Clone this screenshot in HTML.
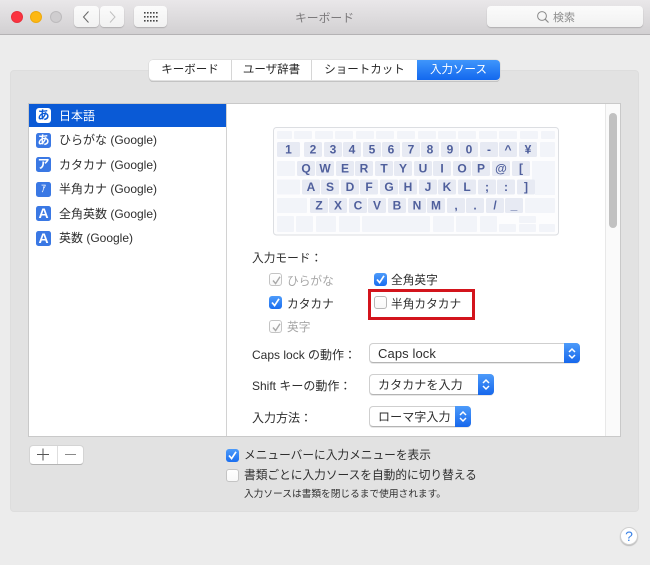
<!DOCTYPE html>
<html lang="ja">
<head>
<meta charset="utf-8">
<title>キーボード</title>
<style>
html,body{margin:0;padding:0;background:#ececec}
body{width:650px;height:565px;overflow:hidden;position:relative;background:#ececec;font-family:"Liberation Sans","Noto Sans CJK JP",sans-serif;font-size:11.7px;color:#2e2e2e;filter:blur(.35px)}
.a{position:absolute;box-sizing:border-box}
.t{position:absolute;white-space:nowrap;line-height:16px;height:16px}
.btn{position:absolute;box-sizing:border-box;background:linear-gradient(#fbfbfb,#f1f1f1);border-radius:4px;box-shadow:0 1px 1px #b0aeb0}
.light{position:absolute;width:12px;height:12px;border-radius:50%;box-sizing:border-box;top:11px}
.tab{position:absolute;top:60px;height:20px;line-height:21px;text-align:center;background:#fff;border-right:1px solid #d6d6d6;box-sizing:border-box;font-size:11.5px;color:#262626}
.ic{position:absolute;left:36px;width:15px;height:15px;border-radius:2.5px;background:#3a78e4;color:#fff;font-size:12px;line-height:15px;text-align:center;font-weight:bold}
.cb{position:absolute;width:13px;height:13px;box-sizing:border-box;border-radius:3px;background:linear-gradient(#ffffff,#f8f8f8);border:1px solid #c4c4c4}
.cb.on{background:linear-gradient(#4d9bfa,#1a6ef0);border:none}
.cb svg{position:absolute;left:0;top:0;width:13px;height:13px}
.sel{position:absolute;left:369px;box-sizing:border-box;border-radius:4px;background:#fff;border:1px solid #cfcfcf;border-bottom-color:#b4b4b4;box-shadow:0 1px 0 #e8e8e8}
.sel b{position:absolute;right:-1px;top:-1px;bottom:-1px;width:16px;background:linear-gradient(#4d9bfa,#1667ec);border-radius:0 4px 4px 0}
.sel svg{position:absolute;left:3px;top:4px;width:10px;height:13px}
.sel span{position:absolute;left:8px;top:1px;line-height:18px;white-space:nowrap;font-size:12px;letter-spacing:.1px}
.dim{color:#a6a6a6}
</style>
</head>
<body>
<!-- title bar -->
<div class="a" style="left:0;top:0;width:650px;height:35px;background:linear-gradient(#e9e7e9,#d2d0d2);border-bottom:1px solid #b4b2b4"></div>
<div class="light" style="left:10.5px;background:#fb3340;border:1px solid #e8303c"></div>
<div class="light" style="left:30px;background:#fdb814;border:1px solid #eda90f"></div>
<div class="light" style="left:49.5px;background:#cfcdcf;border:1px solid #bdbbbd"></div>
<div class="btn" style="left:74px;top:6px;width:25px;height:21px"><svg width="25" height="21" style="position:absolute;left:0;top:0"><path d="M14.5 5.5 L9.5 11 L14.5 16.5" fill="none" stroke="#666" stroke-width="1"/></svg></div>
<div class="btn" style="left:100px;top:6px;width:24px;height:21px"><svg width="24" height="21" style="position:absolute;left:0;top:0"><path d="M10 5.5 L15 11 L10 16.5" fill="none" stroke="#c0c0c0" stroke-width="1"/></svg></div>
<div class="btn" style="left:134px;top:6px;width:33px;height:21px"><svg width="33" height="21" style="position:absolute;left:0;top:0" fill="#444"><g><rect x="10" y="6" width="1.6" height="1.6"/><rect x="13" y="6" width="1.6" height="1.6"/><rect x="16" y="6" width="1.6" height="1.6"/><rect x="19" y="6" width="1.6" height="1.6"/><rect x="22" y="6" width="1.6" height="1.6"/><rect x="10" y="10" width="1.6" height="1.6"/><rect x="13" y="10" width="1.6" height="1.6"/><rect x="16" y="10" width="1.6" height="1.6"/><rect x="19" y="10" width="1.6" height="1.6"/><rect x="22" y="10" width="1.6" height="1.6"/><rect x="10" y="14" width="1.6" height="1.6"/><rect x="13" y="14" width="1.6" height="1.6"/><rect x="16" y="14" width="1.6" height="1.6"/><rect x="19" y="14" width="1.6" height="1.6"/><rect x="22" y="14" width="1.6" height="1.6"/></g></svg></div>
<div class="t" style="left:295px;top:10px;color:#7c7a7c;font-size:11.8px">キーボード</div>
<div class="btn" style="left:487px;top:6px;width:156px;height:21px"><svg width="20" height="20" style="position:absolute;left:47px;top:1px"><circle cx="8" cy="9" r="4.4" fill="none" stroke="#8a8a8a" stroke-width="1"/><path d="M11.3 12.3 L14.5 15.5" stroke="#8a8a8a" stroke-width="1.2"/></svg></div>
<div class="t" style="left:553px;top:10px;color:#8c8c8c;font-size:11px">検索</div>

<!-- panel -->
<div class="a" style="left:10px;top:70px;width:629px;height:442px;background:#e2e2e2;border:1px solid #dddddd;border-radius:4px"></div>

<!-- tabs -->
<div class="a" style="left:149px;top:60px;width:351px;height:20.5px;border-radius:4px;box-shadow:0 0 0 .5px #d2d2d2,0 1px 0 0 #b4b4b4"></div>
<div class="tab" style="left:149px;width:83px;border-radius:4px 0 0 4px">キーボード</div>
<div class="tab" style="left:232px;width:80px">ユーザ辞書</div>
<div class="tab" style="left:312px;width:105px;border-right:none">ショートカット</div>
<div class="tab" style="left:417px;width:83px;border:none;border-radius:0 4px 4px 0;background:linear-gradient(#3f96fb,#1368ee);color:#fff">入力ソース</div>

<!-- list + detail frames -->
<div class="a" style="left:28px;top:103px;width:593px;height:334px;background:#fff;border:1px solid #c9c9c9"></div>
<div class="a" style="left:226px;top:104px;width:1px;height:332px;background:#d2d2d2"></div>
<div class="a" style="left:605px;top:104px;width:15px;height:332px;background:#fafafa;border-left:1px solid #e8e8e8"></div>
<div class="a" style="left:609px;top:113px;width:7.5px;height:115px;background:#c1c1c1;border-radius:4px"></div>

<div class="a" style="left:29px;top:104px;width:197px;height:23px;background:#0a5ad6"></div>
<div class="ic" style="top:107.5px;background:#fff;color:#0a5ad6;border-radius:3px">あ</div>
<div class="t" style="left:59px;top:107.5px;color:#fff;font-size:12px">日本語</div>
<div class="ic" style="top:132.5px">あ</div>
<div class="t" style="left:59px;top:132px;font-size:12px">ひらがな (Google)</div>
<div class="ic" style="top:157px">ア</div>
<div class="t" style="left:59px;top:156.5px;font-size:12px">カタカナ (Google)</div>
<div class="ic" style="top:181.5px;font-size:10px;font-weight:normal">ｱ</div>
<div class="t" style="left:59px;top:181px;font-size:12px">半角カナ (Google)</div>
<div class="ic" style="top:206px;font-size:14px">A</div>
<div class="t" style="left:59px;top:205.5px;font-size:12px">全角英数 (Google)</div>
<div class="ic" style="top:230.5px;font-size:14px">A</div>
<div class="t" style="left:59px;top:230px;font-size:12px">英数 (Google)</div>

<!-- keyboard -->
<svg class="a" style="left:273px;top:127px" width="286" height="109" viewBox="273 127 286 109" font-family="Liberation Sans" font-weight="bold" font-size="12" fill="#4f5f9c" text-anchor="middle">
<rect x="273.5" y="127.5" width="285" height="107.5" rx="3" fill="#fdfdfe" stroke="#dcdee2"/>
<g fill="#f2f4f9">
<rect x="277" y="131" width="15" height="8" rx="1"/><rect x="294" y="131" width="18" height="8" rx="1"/><rect x="315" y="131" width="18" height="8" rx="1"/><rect x="335" y="131" width="18" height="8" rx="1"/><rect x="356" y="131" width="18" height="8" rx="1"/><rect x="376" y="131" width="18" height="8" rx="1"/><rect x="397" y="131" width="18" height="8" rx="1"/><rect x="418" y="131" width="18" height="8" rx="1"/><rect x="438" y="131" width="18" height="8" rx="1"/><rect x="458" y="131" width="18" height="8" rx="1"/><rect x="479" y="131" width="18" height="8" rx="1"/><rect x="499" y="131" width="18" height="8" rx="1"/><rect x="520" y="131" width="18" height="8" rx="1"/><rect x="541" y="131" width="14" height="8" rx="1"/>
<rect x="540" y="142" width="15" height="15" rx="1"/>
<rect x="277" y="161" width="18" height="15" rx="1"/>
<path d="M532 161h23v34h-20v-15h-3z" opacity=".9"/>
<rect x="277" y="179.5" width="23" height="15" rx="1"/>
<rect x="277" y="198" width="30" height="15" rx="1"/><rect x="525" y="198" width="30" height="15" rx="1"/>
<rect x="277" y="216" width="17" height="16" rx="1"/><rect x="296" y="216" width="17" height="16" rx="1"/><rect x="316" y="216" width="20" height="16" rx="1"/><rect x="339" y="216" width="21" height="16" rx="1"/><rect x="362" y="216" width="68" height="16" rx="1"/><rect x="433" y="216" width="21" height="16" rx="1"/><rect x="456" y="216" width="21" height="16" rx="1"/><rect x="480" y="216" width="17" height="16" rx="1"/>
<rect x="499" y="224" width="17" height="8" rx="1"/><rect x="519" y="216" width="17" height="7" rx="1"/><rect x="519" y="224" width="17" height="8" rx="1"/><rect x="539" y="224" width="16" height="8" rx="1"/>
</g>
<g fill="#e7eaf3">
<rect x="277" y="142" width="23" height="15" rx="1.5"/><rect x="304" y="142" width="18" height="15" rx="1.5"/><rect x="324" y="142" width="18" height="15" rx="1.5"/><rect x="343" y="142" width="18" height="15" rx="1.5"/><rect x="363" y="142" width="18" height="15" rx="1.5"/><rect x="382" y="142" width="18" height="15" rx="1.5"/><rect x="402" y="142" width="18" height="15" rx="1.5"/><rect x="421" y="142" width="18" height="15" rx="1.5"/><rect x="441" y="142" width="18" height="15" rx="1.5"/><rect x="460" y="142" width="18" height="15" rx="1.5"/><rect x="480" y="142" width="18" height="15" rx="1.5"/><rect x="499" y="142" width="18" height="15" rx="1.5"/><rect x="519" y="142" width="18" height="15" rx="1.5"/>
<rect x="297" y="161" width="18" height="15" rx="1.5"/><rect x="316" y="161" width="18" height="15" rx="1.5"/><rect x="336" y="161" width="18" height="15" rx="1.5"/><rect x="355" y="161" width="18" height="15" rx="1.5"/><rect x="375" y="161" width="18" height="15" rx="1.5"/><rect x="394" y="161" width="18" height="15" rx="1.5"/><rect x="414" y="161" width="18" height="15" rx="1.5"/><rect x="433" y="161" width="18" height="15" rx="1.5"/><rect x="453" y="161" width="18" height="15" rx="1.5"/><rect x="472" y="161" width="18" height="15" rx="1.5"/><rect x="492" y="161" width="18" height="15" rx="1.5"/><rect x="512" y="161" width="18" height="15" rx="1.5"/>
<rect x="302" y="179.5" width="18" height="15" rx="1.5"/><rect x="321" y="179.5" width="18" height="15" rx="1.5"/><rect x="341" y="179.5" width="18" height="15" rx="1.5"/><rect x="360" y="179.5" width="18" height="15" rx="1.5"/><rect x="380" y="179.5" width="18" height="15" rx="1.5"/><rect x="399" y="179.5" width="18" height="15" rx="1.5"/><rect x="419" y="179.5" width="18" height="15" rx="1.5"/><rect x="438" y="179.5" width="18" height="15" rx="1.5"/><rect x="458" y="179.5" width="18" height="15" rx="1.5"/><rect x="478" y="179.5" width="18" height="15" rx="1.5"/><rect x="497" y="179.5" width="18" height="15" rx="1.5"/><rect x="517" y="179.5" width="18" height="15" rx="1.5"/>
<rect x="310" y="198" width="18" height="15" rx="1.5"/><rect x="329" y="198" width="18" height="15" rx="1.5"/><rect x="349" y="198" width="18" height="15" rx="1.5"/><rect x="368" y="198" width="18" height="15" rx="1.5"/><rect x="388" y="198" width="18" height="15" rx="1.5"/><rect x="408" y="198" width="18" height="15" rx="1.5"/><rect x="427" y="198" width="18" height="15" rx="1.5"/><rect x="447" y="198" width="18" height="15" rx="1.5"/><rect x="466" y="198" width="18" height="15" rx="1.5"/><rect x="486" y="198" width="18" height="15" rx="1.5"/><rect x="505" y="198" width="18" height="15" rx="1.5"/>
</g>
<text x="288.5" y="153.5">1</text><text x="313" y="153.5">2</text><text x="333" y="153.5">3</text><text x="352" y="153.5">4</text><text x="372" y="153.5">5</text><text x="391" y="153.5">6</text><text x="411" y="153.5">7</text><text x="430" y="153.5">8</text><text x="450" y="153.5">9</text><text x="469" y="153.5">0</text><text x="489" y="153.5">-</text><text x="508" y="153.5">^</text><text x="528" y="153.5">¥</text>
<text x="306" y="172.5">Q</text><text x="325" y="172.5">W</text><text x="345" y="172.5">E</text><text x="364" y="172.5">R</text><text x="384" y="172.5">T</text><text x="403" y="172.5">Y</text><text x="423" y="172.5">U</text><text x="442" y="172.5">I</text><text x="462" y="172.5">O</text><text x="481" y="172.5">P</text><text x="501" y="172.5">@</text><text x="521" y="172.5">[</text>
<text x="311" y="191">A</text><text x="330" y="191">S</text><text x="350" y="191">D</text><text x="369" y="191">F</text><text x="389" y="191">G</text><text x="408" y="191">H</text><text x="428" y="191">J</text><text x="447" y="191">K</text><text x="467" y="191">L</text><text x="487" y="191">;</text><text x="506" y="191">:</text><text x="526" y="191">]</text>
<text x="319" y="209.5">Z</text><text x="338" y="209.5">X</text><text x="358" y="209.5">C</text><text x="377" y="209.5">V</text><text x="397" y="209.5">B</text><text x="417" y="209.5">N</text><text x="436" y="209.5">M</text><text x="456" y="209.5">,</text><text x="475" y="209.5">.</text><text x="495" y="209.5">/</text><text x="514" y="209.5">_</text>
</svg>

<!-- input modes -->
<div class="t" style="left:252px;top:250.5px">入力モード：</div>
<div class="cb" style="left:269px;top:273px"><svg viewBox="0 0 13 13"><path d="M3 6.5 L5.6 9.6 L10 2.8" fill="none" stroke="#a8a8a8" stroke-width="1.4"/></svg></div>
<div class="t dim" style="left:287px;top:273.5px">ひらがな</div>
<div class="cb on" style="left:374px;top:273px"><svg viewBox="0 0 13 13"><path d="M3 6.5 L5.6 9.6 L10 2.8" fill="none" stroke="#fff" stroke-width="1.7"/></svg></div>
<div class="t" style="left:391px;top:273px">全角英字</div>
<div class="cb on" style="left:269px;top:296px"><svg viewBox="0 0 13 13"><path d="M3 6.5 L5.6 9.6 L10 2.8" fill="none" stroke="#fff" stroke-width="1.7"/></svg></div>
<div class="t" style="left:287px;top:296.5px">カタカナ</div>
<div class="cb" style="left:374px;top:296px;border-color:#b8b8b8"></div>
<div class="t" style="left:391px;top:296.5px">半角カタカナ</div>
<div class="a" style="left:368px;top:289px;width:107px;height:31px;border:3px solid #d3141c"></div>
<div class="cb" style="left:269px;top:320px"><svg viewBox="0 0 13 13"><path d="M3 6.5 L5.6 9.6 L10 2.8" fill="none" stroke="#a8a8a8" stroke-width="1.4"/></svg></div>
<div class="t dim" style="left:287px;top:320px">英字</div>

<!-- selects -->
<div class="t" style="left:252px;top:347px;font-size:12px">Caps lock の動作：</div>
<div class="sel" style="top:343px;width:211px;height:20px"><span style="font-size:13px">Caps lock</span><b><svg viewBox="0 0 10 13"><path d="M2 5 L5 2 L8 5 M2 8 L5 11 L8 8" fill="none" stroke="#fff" stroke-width="1.5"/></svg></b></div>
<div class="t" style="left:252px;top:378px;font-size:12px">Shift キーの動作：</div>
<div class="sel" style="top:374px;width:125px;height:21px"><span style="top:1px">カタカナを入力</span><b><svg viewBox="0 0 10 13"><path d="M2 5 L5 2 L8 5 M2 8 L5 11 L8 8" fill="none" stroke="#fff" stroke-width="1.5"/></svg></b></div>
<div class="t" style="left:252px;top:410px;font-size:12px">入力方法：</div>
<div class="sel" style="top:406px;width:102px;height:21px"><span style="top:1px">ローマ字入力</span><b><svg viewBox="0 0 10 13"><path d="M2 5 L5 2 L8 5 M2 8 L5 11 L8 8" fill="none" stroke="#fff" stroke-width="1.5"/></svg></b></div>

<!-- + / - -->
<div class="a" style="left:29px;top:445px;width:55px;height:20px;background:#fff;border:1px solid #d4d4d4;border-bottom-color:#b4b4b4;border-radius:4px"></div>
<div class="a" style="left:57px;top:446px;width:1px;height:18px;background:#dedede"></div>
<svg class="a" style="left:29px;top:445px" width="55" height="20"><path d="M8 9.5H20M14 3.5V15.5" stroke="#555" stroke-width="1" fill="none"/><path d="M36 9.5H47" stroke="#8a8a8a" stroke-width="1"/></svg>

<!-- bottom options -->
<div class="cb on" style="left:226px;top:449px"><svg viewBox="0 0 13 13"><path d="M3 6.5 L5.6 9.6 L10 2.8" fill="none" stroke="#fff" stroke-width="1.7"/></svg></div>
<div class="t" style="left:244px;top:448px">メニューバーに入力メニューを表示</div>
<div class="cb" style="left:226px;top:469px"></div>
<div class="t" style="left:244px;top:468px">書類ごとに入力ソースを自動的に切り替える</div>
<div class="t" style="left:244px;top:487px;font-size:9.7px">入力ソースは書類を閉じるまで使用されます。</div>

<!-- help -->
<div class="a" style="left:620px;top:527px;width:18px;height:18px;border-radius:50%;background:#fff;border:1px solid #d0d0d0;box-shadow:0 1px 1px #b8b8b8;text-align:center;line-height:16px;color:#3a82e6;font-size:14px">?</div>
</body>
</html>
